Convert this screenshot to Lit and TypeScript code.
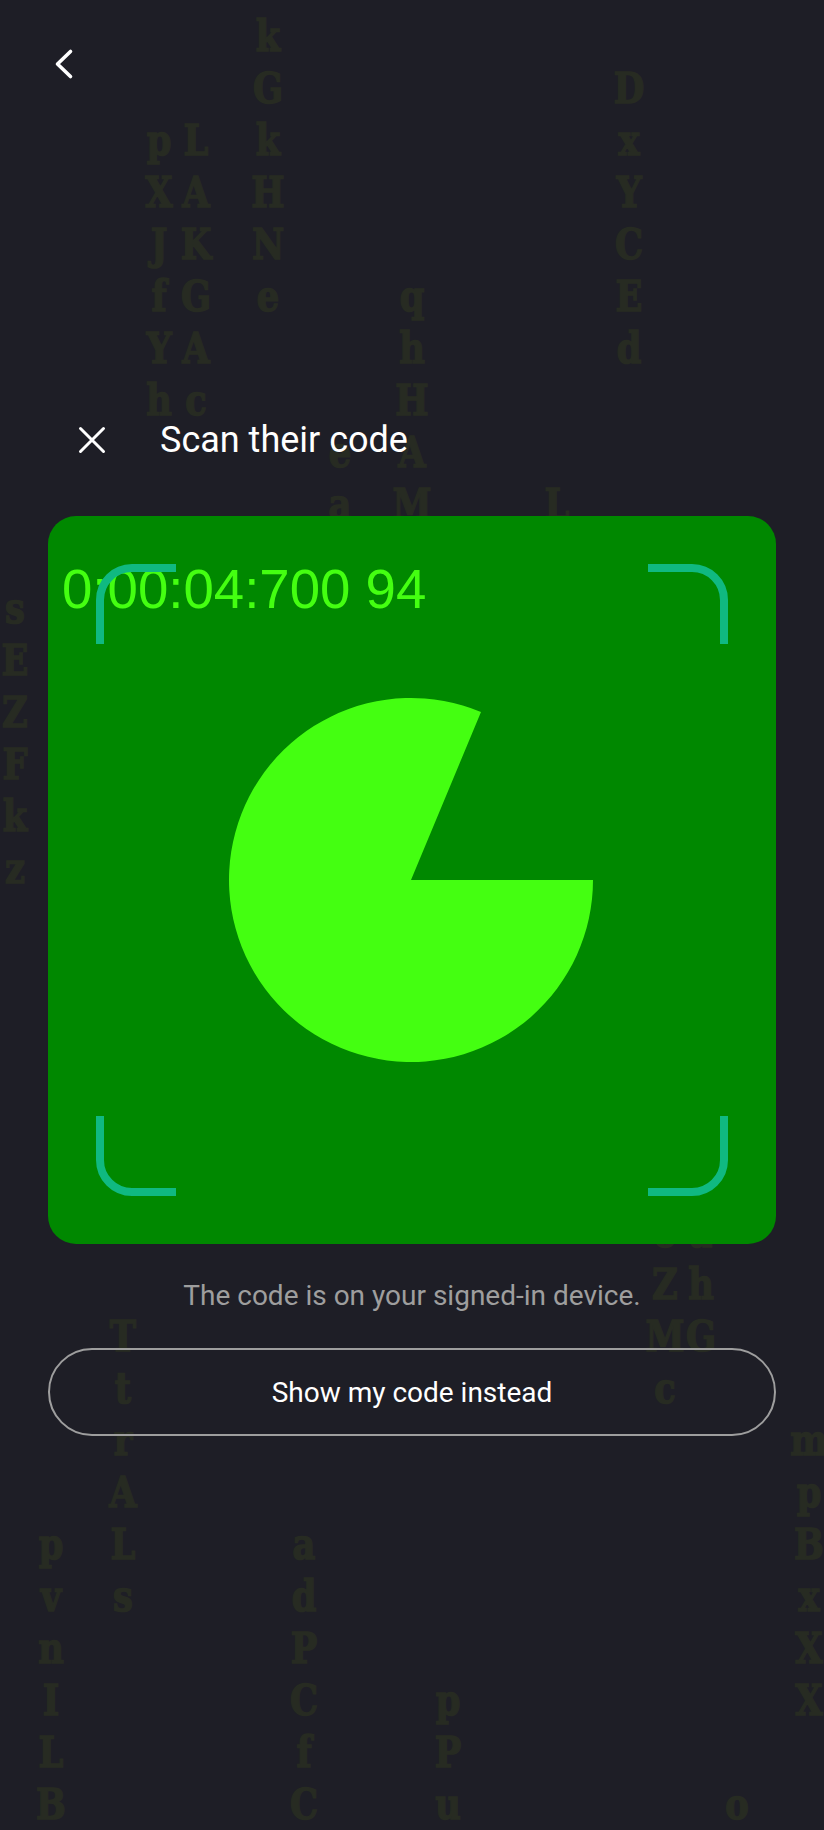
import { LitElement, html, css, svg } from 'lit';
import { customElement } from 'lit/decorators.js';

// falling columns of the rain: horizontal slot, row of the first letter, letters
const COL_WIDTH = 36.1;
const ROW_HEIGHT = 52;

const DROPS = [
  { slot: 0, row: 12, text: 'sEZFkz' },
  { slot: 1, row: 30, text: 'pvnILB' },
  { slot: 3, row: 26, text: 'TtrALs' },
  { slot: 4, row: 3, text: 'pXJfYh' },
  { slot: 5, row: 3, text: 'LAKGAc' },
  { slot: 7, row: 1, text: 'kGkHNe' },
  { slot: 8, row: 30, text: 'adPCfC' },
  { slot: 9, row: 9, text: 'ea' },
  { slot: 11, row: 6, text: 'qhHAM' },
  { slot: 12, row: 33, text: 'pPu' },
  { slot: 15, row: 10, text: 'L' },
  { slot: 17, row: 2, text: 'DxYCEd' },
  { slot: 18, row: 24, text: 'oZMc' },
  { slot: 19, row: 24, text: 'ahG' },
  { slot: 20, row: 35, text: 'o' },
  { slot: 22, row: 28, text: 'mpBxXX' },
];

@customElement('app-root')
export class AppRoot extends LitElement {
  static styles = css`
    :host {
      display: block;
      width: 824px;
      height: 1830px;
      position: relative;
      overflow: hidden;
      background: #1e1e26;
      font-family: Roboto, "Liberation Sans", sans-serif;
    }

    .rain {
      position: absolute;
      inset: 0;
    }
    .drop {
      position: absolute;
      width: 36px;
      font-family: "DejaVu Serif", serif;
      font-weight: 700;
      font-size: 42px;
      line-height: 52px;
      text-align: center;
      color: #272b22;
      -webkit-text-stroke: 1.6px #272b22;
      transform: scaleX(0.84);
    }
    .drop span {
      display: flex;
      justify-content: center;
    }

    .page {
      position: relative;
      display: flex;
      flex-direction: column;
      padding: 48px 48px 0;
    }
    .back {
      width: 32px;
      height: 32px;
      display: flex;
      color: #fff;
    }
    .head {
      display: flex;
      align-items: center;
      gap: 46px;
      margin-top: 330px;
      padding-left: 22px;
      height: 60px;
    }
    .close {
      width: 44px;
      height: 44px;
      color: #fff;
      display: block;
    }
    .title {
      font-size: 36px;
      font-weight: 400;
      color: #fff;
    }
    .scanner {
      position: relative;
      margin-top: 46px;
      width: 728px;
      height: 728px;
      border-radius: 28px;
      background: #008800;
      overflow: hidden;
    }
    .timer {
      position: absolute;
      left: 14px;
      top: 43px;
      font-family: "Liberation Sans", sans-serif;
      font-size: 54.6px;
      line-height: 62px;
      color: #44ff11;
      white-space: pre;
    }
    .pie {
      position: absolute;
      left: 0;
      top: 0;
      width: 728px;
      height: 728px;
    }
    .frame {
      position: absolute;
      width: 80px;
      height: 80px;
      color: #10b981;
    }
    .tl { left: 48px; top: 48px; }
    .tr { right: 48px; top: 48px; transform: scaleX(-1); }
    .bl { left: 48px; bottom: 48px; transform: scaleY(-1); }
    .br { right: 48px; bottom: 48px; transform: scale(-1, -1); }

    .hint {
      margin-top: 34px;
      text-align: center;
      font-size: 28px;
      line-height: 36px;
      color: #9e9e9e;
    }
    .switch {
      box-sizing: border-box;
      margin-top: 34px;
      width: 728px;
      height: 88px;
      border: 2px solid #9e9e9e;
      border-radius: 44px;
      background: transparent;
      color: #fff;
      font-family: inherit;
      font-size: 28px;
      font-weight: 400;
    }
  `;

  renderDrop(d: { slot: number; row: number; text: string }) {
    // the baseline of a letter sits about 41px below the top of its 52px line
    const top = d.row * ROW_HEIGHT - 41;
    return html`<div class="drop" style="left:${15 + d.slot * COL_WIDTH - 18}px;top:${top}px">
      ${[...d.text].map((c) => html`<span>${c}</span>`)}
    </div>`;
  }

  corner() {
    return svg`<svg viewBox="0 0 80 80" width="80" height="80" fill="none">
      <path d="M4 80V36A32 32 0 0 1 36 4H80" stroke="currentColor" stroke-width="8" />
    </svg>`;
  }

  render() {
    return html`
      <div class="rain" aria-hidden="true">${DROPS.map((d) => this.renderDrop(d))}</div>
      <div class="page">
        <div class="back">
          <svg viewBox="0 0 32 32" width="32" height="32" fill="none">
            <path d="M22.5 3.5L9.5 16L22.5 28.5" stroke="currentColor" stroke-width="3.6" stroke-linecap="round" stroke-linejoin="round" />
          </svg>
        </div>
        <div class="head">
          <svg class="close" viewBox="0 0 44 44" fill="none">
            <path d="M10.5 10.5L33.5 33.5M33.5 10.5L10.5 33.5" stroke="currentColor" stroke-width="3" stroke-linecap="round" />
          </svg>
          <div class="title">Scan their code</div>
        </div>
        <div class="scanner">
          <svg class="pie" viewBox="0 0 728 728">
            <path d="M363 364H545A182 182 0 1 1 433 196Z" fill="#44ff11" />
          </svg>
          <div class="timer">0:00:04:700 94</div>
          <div class="frame tl">${this.corner()}</div>
          <div class="frame tr">${this.corner()}</div>
          <div class="frame bl">${this.corner()}</div>
          <div class="frame br">${this.corner()}</div>
        </div>
        <div class="hint">The code is on your signed-in device.</div>
        <button class="switch">Show my code instead</button>
      </div>
    `;
  }
}
